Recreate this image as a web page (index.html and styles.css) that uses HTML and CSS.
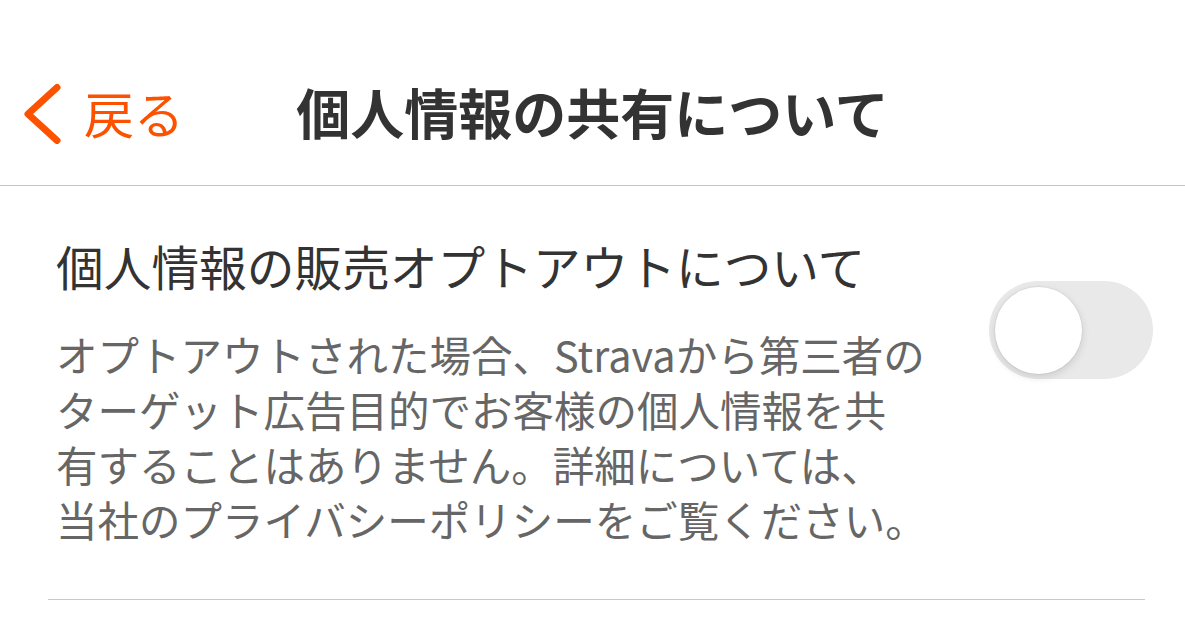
FILE: index.html
```html
<!DOCTYPE html>
<html lang="ja">
<head>
<meta charset="utf-8">
<link rel="stylesheet" href="styles.css">
</head>
<body>
<header class="nav">
  <div class="back">
    <svg class="chev" width="40" height="64" viewBox="0 0 40 64"><path d="M35 7.5 L6 34 L35 60.5" fill="none" stroke="#fc5200" stroke-width="7" stroke-linecap="round" stroke-linejoin="round"/></svg>
    <span class="back-label">戻る</span>
  </div>
  <h1 class="title">個人情報の共有について</h1>
  <div class="nav-spacer"></div>
</header>
<section class="row">
  <div class="text">
    <div class="heading">個人情報の販売オプトアウトについて</div>
    <div class="desc">オプトアウトされた場合、Stravaから第三者の<br>ターゲット広告目的でお客様の個人情報を共<br>有することはありません。詳細については、<br>当社のプライバシーポリシーをご覧ください。</div>
  </div>
  <div class="switch"><div class="knob"></div></div>
</section>
<div class="sep"></div>
</body>
</html>
```
FILE: styles.css
```css
html, body {
  margin: 0;
  padding: 0;
  background: #ffffff;
  font-family: "Noto Sans CJK JP", "Noto Sans", sans-serif;
}
.nav {
  height: 185px;
  box-sizing: content-box;
  border-bottom: 1px solid #c4c4c4;
  display: grid;
  grid-template-columns: 1fr auto 1fr;
  align-items: start;
  padding-top: 0;
}
.back {
  margin-top: 80px;
  padding-left: 22px;
  display: flex;
  align-items: center;
  gap: 22px;
}
.chev {
  display: block;
}
.back-label {
  color: #fc5200;
  font-size: 50px;
  line-height: 64px;
  font-weight: 400;
}
.title {
  margin: 80px 0 0 0;
  font-size: 54px;
  font-weight: 700;
  color: #333333;
  line-height: 64px;
}
.row {
  display: flex;
  justify-content: space-between;
  padding: 50px 32px 52px 56px;
}
.heading {
  font-size: 47.7px;
  line-height: 60px;
  color: #333333;
}
.desc {
  margin-top: 31px;
  font-size: 41.5px;
  line-height: 55px;
  color: #666666;
}
.switch {
  margin-top: 45px;
  width: 164px;
  height: 98px;
  border-radius: 49px;
  background: #e9e9ea;
  flex-shrink: 0;
  position: relative;
}
.knob {
  position: absolute;
  left: 6px;
  top: 6px;
  width: 87px;
  height: 87px;
  border-radius: 50%;
  background: #ffffff;
  box-shadow: 0 3px 8px rgba(0,0,0,0.13), 0 0 0 1px rgba(0,0,0,0.04);
}
.sep {
  height: 1px;
  background: #c8c8c8;
  margin: 0 40px 0 48px;
}
```
